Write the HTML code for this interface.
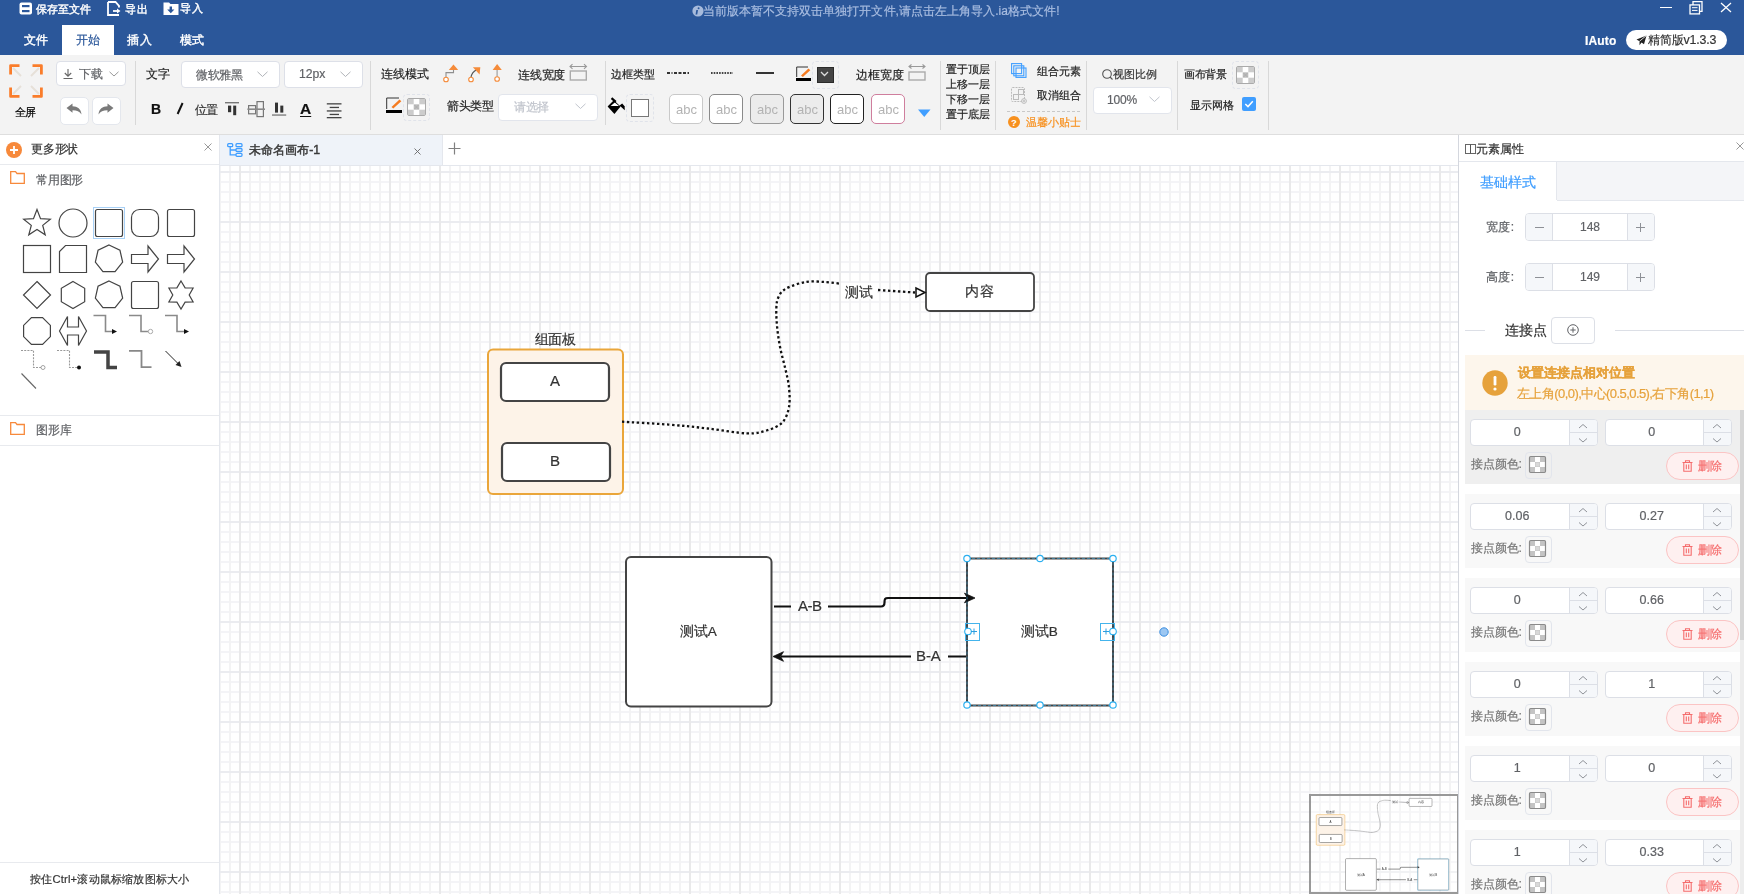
<!DOCTYPE html><html><head><meta charset="utf-8"><style>
*{box-sizing:border-box;margin:0;padding:0}
html,body{width:1744px;height:894px;overflow:hidden}
body{position:relative;font-family:"Liberation Sans",sans-serif;font-size:12px;color:#333;background:#fff}
.a{position:absolute}
.t{white-space:nowrap;will-change:transform;-webkit-text-stroke-width:0.2px}
</style></head><body>
<div class="a" style="left:0px;top:0px;width:1744px;height:55px;background:#2b579a"></div>
<svg class="a" style="left:19px;top:2px;" width="14" height="13" viewBox="0 0 14 13"><rect x="0.5" y="0.5" width="12.5" height="12" rx="2" fill="#fff"/><rect x="3" y="3" width="7.5" height="2.2" fill="#2b579a"/><rect x="3" y="8" width="7.5" height="2.2" fill="#2b579a"/></svg>
<div class="a t" style="left:35.84px;top:3.68px;font-size:11.2px;line-height:11.2px;color:#fff;font-weight:normal;letter-spacing:-0.040px;-webkit-text-stroke-width:0.4px">保存至文件</div>
<svg class="a" style="left:106px;top:1px;" width="17" height="15" viewBox="0 0 17 15"><path d="M2 1H9.5L13 4.8V6.5M2 1V14H13" fill="none" stroke="#fff" stroke-width="1.8"/><path d="M7 10H12" stroke="#fff" stroke-width="1.8"/><path d="M11 7.5L14.5 10L11 12.5Z" fill="#fff"/></svg>
<div class="a t" style="left:125.00px;top:4.00px;font-size:11px;line-height:11px;color:#fff;font-weight:normal;letter-spacing:0.800px;-webkit-text-stroke-width:0.4px">导出</div>
<svg class="a" style="left:163px;top:1px;" width="16" height="15" viewBox="0 0 16 15"><path d="M0.5 1.5H6L7.5 3H15.5V14H0.5Z" fill="#fff"/><path d="M6.6 5.6V8.6H4.2L7.8 12.3L11.4 8.6H9V5.6Z" fill="#2b579a"/></svg>
<div class="a t" style="left:180.00px;top:3.20px;font-size:11px;line-height:11px;color:#fff;font-weight:normal;letter-spacing:0.800px;-webkit-text-stroke-width:0.4px">导入</div>
<svg class="a" style="left:692px;top:5px;" width="12" height="12" viewBox="0 0 12 12"><circle cx="6" cy="6" r="5.6" fill="#a7bbdc"/><rect x="5.2" y="5" width="1.7" height="4.5" fill="#2b579a" transform="skewX(-10)"/><circle cx="6.6" cy="3.3" r="0.95" fill="#2b579a"/></svg>
<div class="a t" style="left:703.20px;top:4.52px;font-size:12px;line-height:12px;color:#a9bde0;font-weight:normal;letter-spacing:0.035px;">当前版本暂不支持双击单独打开文件,请点击左上角导入.ia格式文件!</div>
<div class="a" style="left:1660px;top:7px;width:12px;height:1.3px;background:#fff"></div>
<svg class="a" style="left:1688px;top:0px;" width="16" height="15" viewBox="0 0 16 15"><rect x="2" y="4.9" width="9.5" height="9" fill="none" stroke="#fff" stroke-width="1.3"/><path d="M5 4.9V1.7H14V11.3H11.5" fill="none" stroke="#fff" stroke-width="1.3"/><path d="M4 7.7H9.5M4 10.4H9.5" stroke="#fff" stroke-width="1"/></svg>
<svg class="a" style="left:1720px;top:2px;" width="12" height="11" viewBox="0 0 12 11"><path d="M1 1L11 10M11 1L1 10" stroke="#fff" stroke-width="1.3"/></svg>
<div class="a" style="left:62px;top:25px;width:52px;height:30px;background:#fff"></div>
<div class="a t" style="left:23.64px;top:34.04px;font-size:12.4px;line-height:12.4px;color:#fff;font-weight:normal;letter-spacing:0.480px;-webkit-text-stroke-width:0.4px">文件</div>
<div class="a t" style="left:75.98px;top:34.36px;font-size:12.4px;line-height:12.4px;color:#2b579a;font-weight:normal;">开始</div>
<div class="a t" style="left:127.16px;top:34.36px;font-size:12.4px;line-height:12.4px;color:#fff;font-weight:normal;letter-spacing:0.640px;-webkit-text-stroke-width:0.4px">插入</div>
<div class="a t" style="left:179.82px;top:34.36px;font-size:12.4px;line-height:12.4px;color:#fff;font-weight:normal;letter-spacing:0.160px;-webkit-text-stroke-width:0.4px">模式</div>
<div class="a t" style="left:1585.12px;top:35.10px;font-size:12px;line-height:12px;color:#fff;font-weight:bold;letter-spacing:0.160px;">IAuto</div>
<div class="a" style="left:1626px;top:30px;width:101px;height:20px;background:#fff;border-radius:10px"></div>
<svg class="a" style="left:1636px;top:35px;" width="11" height="11" viewBox="0 0 11 11"><path d="M10.5 0.5L0.5 4.5L3.5 6.2L3.5 10.3L5.5 7.6L8 9.2Z" fill="#222"/><path d="M10.5 0.5L3.5 6.2" stroke="#fff" stroke-width="0.8"/></svg>
<div class="a t" style="left:1647.82px;top:34.20px;font-size:12.4px;line-height:12.4px;color:#333;font-weight:normal;letter-spacing:-0.180px;">精简版v1.3.3</div>
<div class="a" style="left:0px;top:55px;width:1744px;height:79px;background:#f3f3f3"></div>
<div class="a" style="left:0px;top:133.5px;width:1744px;height:1px;background:#dedede"></div>
<div class="a" style="left:135px;top:61px;width:1px;height:64px;background:#d8d8d8"></div>
<div class="a" style="left:370px;top:61px;width:1px;height:69px;background:#d8d8d8"></div>
<div class="a" style="left:605px;top:61px;width:1px;height:64px;background:#d8d8d8"></div>
<div class="a" style="left:940px;top:61px;width:1px;height:69px;background:#d8d8d8"></div>
<div class="a" style="left:995px;top:61px;width:1px;height:69px;background:#d8d8d8"></div>
<div class="a" style="left:1086px;top:61px;width:1px;height:69px;background:#d8d8d8"></div>
<div class="a" style="left:1177px;top:61px;width:1px;height:69px;background:#d8d8d8"></div>
<div class="a" style="left:1268px;top:61px;width:1px;height:69px;background:#d8d8d8"></div>
<svg class="a" style="left:9px;top:64px;" width="34" height="34" viewBox="0 0 34 34"><g stroke="#e6e0d8" stroke-width="2"><path d="M4 4L12 12M30 4L22 12M4 30L12 22M30 30L22 22"/></g>
<g fill="none" stroke="#fa7d2b" stroke-width="2.8" stroke-linejoin="round"><path d="M1.6 10.5V1.6H10.5M23.5 1.6H32.4V10.5M1.6 23.5V32.4H10.5M23.5 32.4H32.4V23.5"/></g></svg>
<div class="a t" style="left:15.48px;top:106.50px;font-size:11px;line-height:11px;color:#000;font-weight:normal;letter-spacing:-0.800px;">全屏</div>
<div class="a" style="left:56px;top:61px;width:69.5px;height:24.5px;background:#fff;border:1px solid #dde0e8;border-radius:4px"></div>
<svg class="a" style="left:62px;top:68px;" width="12" height="12" viewBox="0 0 12 12"><path d="M6 1V8M2.8 5L6 8.2L9.2 5M1.5 10.5H10.5" fill="none" stroke="#666" stroke-width="1.1"/></svg>
<div class="a t" style="left:78.82px;top:67.84px;font-size:12px;line-height:12px;color:#606266;font-weight:normal;letter-spacing:0.480px;">下载</div>
<svg class="a" style="left:109px;top:71px;" width="10" height="6" viewBox="0 0 10 6"><path d="M0.5 0.8L5 5L9.5 0.8" fill="none" stroke="#999" stroke-width="1"/></svg>
<div class="a" style="left:59.5px;top:96.5px;width:29px;height:28px;background:#fff;border:1px solid #e4e7ed;border-radius:5px"></div>
<div class="a" style="left:92px;top:96.5px;width:29px;height:28px;background:#fff;border:1px solid #e4e7ed;border-radius:5px"></div>
<svg class="a" style="left:66px;top:103px;" width="16" height="12" viewBox="0 0 16 12"><path d="M0.5 5L6.5 0.5V3.3C11.5 3.3 15 6 15.5 11.5C13.5 8.5 11 7.3 6.5 7.3V9.8Z" fill="#7a7a7a"/></svg>
<svg class="a" style="left:98px;top:103px;" width="16" height="12" viewBox="0 0 16 12"><path d="M15.5 5L9.5 0.5V3.3C4.5 3.3 1 6 0.5 11.5C2.5 8.5 5 7.3 9.5 7.3V9.8Z" fill="#7a7a7a"/></svg>
<div class="a t" style="left:145.50px;top:68.36px;font-size:12px;line-height:12px;color:#222;font-weight:normal;">文字</div>
<div class="a" style="left:180.5px;top:61px;width:99px;height:27px;background:#fff;border:1px solid #dde0e8;border-radius:4px"></div>
<div class="a t" style="left:195.80px;top:68.98px;font-size:12.1px;line-height:12.1px;color:#606266;font-weight:normal;letter-spacing:-0.266px;">微软雅黑</div>
<svg class="a" style="left:257px;top:71px;" width="11" height="7" viewBox="0 0 11 7"><path d="M0.5 0.8L5.5 5.5L10.5 0.8" fill="none" stroke="#b0b3b8" stroke-width="1"/></svg>
<div class="a" style="left:283.5px;top:61px;width:79px;height:27px;background:#fff;border:1px solid #dde0e8;border-radius:4px"></div>
<div class="a t" style="left:298.70px;top:68.20px;font-size:12.2px;line-height:12.2px;color:#606266;font-weight:normal;">12px</div>
<svg class="a" style="left:340px;top:71px;" width="11" height="7" viewBox="0 0 11 7"><path d="M0.5 0.8L5.5 5.5L10.5 0.8" fill="none" stroke="#b0b3b8" stroke-width="1"/></svg>
<div class="a t" style="left:151.00px;top:102.00px;font-size:14px;line-height:14px;color:#111;font-weight:bold;">B</div>
<svg class="a" style="left:175px;top:102px;" width="9" height="13" viewBox="0 0 9 13"><path d="M7.6 1L2.6 12" stroke="#111" stroke-width="2"/></svg>
<div class="a t" style="left:194.90px;top:103.70px;font-size:12px;line-height:12px;color:#333;font-weight:normal;letter-spacing:-0.800px;">位置</div>
<svg class="a" style="left:224px;top:101px;" width="16" height="16" viewBox="0 0 16 16"><rect x="1" y="1" width="14" height="1.4" fill="#777"/><rect x="4" y="4.6" width="3.2" height="6.6" fill="#333"/><rect x="9.2" y="4.6" width="3" height="9.6" fill="#333"/></svg>
<svg class="a" style="left:246px;top:100px;" width="20" height="18" viewBox="0 0 20 18"><g fill="none" stroke="#777" stroke-width="1.2"><rect x="2.6" y="5.6" width="7" height="8.2"/><rect x="11" y="1.6" width="6.4" height="15"/></g><path d="M1.4 9.2H19" stroke="#888" stroke-width="1.6"/></svg>
<svg class="a" style="left:271px;top:101px;" width="16" height="16" viewBox="0 0 16 16"><rect x="4" y="1.6" width="3" height="10" fill="#333"/><rect x="9.3" y="4.6" width="3" height="7" fill="#333"/><rect x="1" y="13.4" width="14.2" height="1.3" fill="#777"/></svg>
<div class="a t" style="left:300.00px;top:101.00px;font-size:15.5px;line-height:15.5px;color:#111;font-weight:bold;text-decoration:underline;text-decoration-thickness:1px;text-underline-offset:1.5px">A</div>
<svg class="a" style="left:326px;top:102px;" width="16" height="17" viewBox="0 0 16 17"><g fill="#444"><rect x="0.8" y="1.2" width="14.7" height="1.3"/><rect x="3.7" y="4.8" width="9.3" height="1.3"/><rect x="0.8" y="8.3" width="14.7" height="1.3"/><rect x="3.7" y="11.8" width="9.3" height="1.3"/><rect x="0.8" y="15" width="14.7" height="1.3"/></g></svg>
<div class="a t" style="left:380.50px;top:68.36px;font-size:12.3px;line-height:12.3px;color:#222;font-weight:normal;letter-spacing:0.154px;">连线模式</div>
<svg class="a" style="left:442px;top:64px;" width="17" height="19" viewBox="0 0 17 19"><path d="M4 13.2V8.6H11.5V5" fill="none" stroke="#8f8f8f" stroke-width="1.1"/><circle cx="4" cy="15.5" r="2.3" fill="#fff" stroke="#f58b3a" stroke-width="1.1"/><path d="M11.5 0.6L16.2 5.9H6.8Z" fill="#f58b3a"/></svg>
<svg class="a" style="left:467px;top:64px;" width="14" height="19" viewBox="0 0 14 19"><path d="M4 13.2C4.5 10 6.5 7.5 9.5 5.8" fill="none" stroke="#555" stroke-width="1.1"/><circle cx="4" cy="15.5" r="2.3" fill="#fff" stroke="#f58b3a" stroke-width="1.1"/><path d="M5.9 3.2L13.3 3.2L12.6 10.6Z" fill="#f58b3a"/></svg>
<svg class="a" style="left:492px;top:64px;" width="11" height="19" viewBox="0 0 11 19"><path d="M5.1 5V12.8" stroke="#999" stroke-width="1.1"/><circle cx="5.1" cy="15" r="2.3" fill="#fff" stroke="#f58b3a" stroke-width="1.1"/><path d="M5.1 0L9.8 5.9H0.6Z" fill="#f58b3a"/></svg>
<div class="a t" style="left:517.50px;top:69.16px;font-size:12.3px;line-height:12.3px;color:#222;font-weight:normal;letter-spacing:-0.208px;">连线宽度</div>
<svg class="a" style="left:569px;top:63px;" width="19" height="18" viewBox="0 0 19 18"><g fill="none" stroke="#999" stroke-width="1.1"><path d="M1 3.5H17.5M3.5 1.2L1 3.5L3.5 5.8M15 1.2L17.5 3.5L15 5.8"/><rect x="1.3" y="8" width="16" height="9" stroke="#aaa" stroke-width="1.4"/></g></svg>
<svg class="a" style="left:386px;top:97px;" width="17" height="16" viewBox="0 0 17 16"><path d="M0.7 12V1H13" fill="none" stroke="#333" stroke-width="1"/><path d="M5.5 10L13.5 2.5L15.3 4.3L7.3 11.5Z" fill="#f57b20"/><rect x="0" y="13" width="16" height="3" fill="#000"/></svg>
<div class="a" style="left:402.5px;top:93.5px;width:27px;height:27px;border:1px dashed #e0e3ea;border-radius:4px"></div>
<svg class="a" style="left:407px;top:98px;" width="19" height="18" viewBox="0 0 19 18"><rect x="0.5" y="0.5" width="18" height="17" rx="1.5" fill="#fff" stroke="#aaa" stroke-width="1"/><rect x="1" y="1" width="5.7" height="5.3" fill="#ccc"/><rect x="12.3" y="1" width="5.7" height="5.3" fill="#ccc"/><rect x="6.7" y="6.3" width="5.6" height="5.4" fill="#bdbdbd"/><rect x="1" y="11.7" width="5.7" height="5.3" fill="#ccc"/><rect x="12.3" y="11.7" width="5.7" height="5.3" fill="#ccc"/><path d="M7.5 7L11.5 11M11.5 7L7.5 11" stroke="#aaa" stroke-width="0.8"/></svg>
<div class="a t" style="left:446.50px;top:100.18px;font-size:12.1px;line-height:12.1px;color:#222;font-weight:normal;letter-spacing:-0.266px;">箭头类型</div>
<div class="a" style="left:498px;top:93.5px;width:99.5px;height:27px;background:#fff;border:1px solid #e2e5ec;border-radius:4px"></div>
<div class="a t" style="left:513.82px;top:101.16px;font-size:12px;line-height:12px;color:#c0c4cc;font-weight:normal;letter-spacing:-0.480px;">请选择</div>
<svg class="a" style="left:575px;top:103px;" width="11" height="7" viewBox="0 0 11 7"><path d="M0.5 0.8L5.5 5.5L10.5 0.8" fill="none" stroke="#c0c4cc" stroke-width="1"/></svg>
<div class="a t" style="left:610.50px;top:68.66px;font-size:11px;line-height:11px;color:#222;font-weight:normal;letter-spacing:-0.155px;">边框类型</div>
<svg class="a" style="left:667px;top:72px;" width="22" height="2" viewBox="0 0 22 2"><path d="M0 1H22" stroke="#333" stroke-width="1.8" stroke-dasharray="3 1.5 1 1.5 3 1.5 3 1.5 3 1.5"/></svg>
<svg class="a" style="left:711px;top:72px;" width="22" height="2" viewBox="0 0 22 2"><path d="M0 1H22" stroke="#444" stroke-width="1.8" stroke-dasharray="1.6 1.1"/></svg>
<div class="a" style="left:756px;top:72px;width:18px;height:2px;background:#333"></div>
<svg class="a" style="left:607px;top:97px;" width="19" height="18" viewBox="0 0 19 18"><path d="M0.6 9.5L6.8 3.3L13.6 9.5L7.4 17Z" fill="#000"/><path d="M3.6 9.1L7.8 5.4L12 9.1Z" fill="#fff"/><path d="M4.5 1.2L8.8 4.8" stroke="#000" stroke-width="2.2"/><path d="M12.5 8.5L15.2 6.6L17.6 9.3L17.8 13.3Z" fill="#000"/></svg>
<div class="a" style="left:626px;top:94px;width:28px;height:28px;border:1px dashed #e0e3ea;border-radius:4px"></div>
<div class="a" style="left:631px;top:99px;width:18px;height:18px;background:#fff;border:1px solid #777"></div>
<div class="a" style="left:669px;top:94px;width:34px;height:30px;background:#fff;border:1px solid #c9c9c9;border-radius:5px"></div>
<div class="a t" style="left:675.80px;top:101.80px;font-size:13px;line-height:13px;color:#b3b3b3;font-weight:normal;line-height:16px;-webkit-text-stroke-width:0">abc</div>
<div class="a" style="left:709px;top:94px;width:34px;height:30px;background:#fff;border:1px solid #8a8a8a;border-radius:5px"></div>
<div class="a t" style="left:715.80px;top:101.80px;font-size:13px;line-height:13px;color:#b3b3b3;font-weight:normal;line-height:16px;-webkit-text-stroke-width:0">abc</div>
<div class="a" style="left:750px;top:94px;width:34px;height:30px;background:#ececec;border:1px solid #9a9a9a;border-radius:5px"></div>
<div class="a t" style="left:756.80px;top:101.80px;font-size:13px;line-height:13px;color:#b3b3b3;font-weight:normal;line-height:16px;-webkit-text-stroke-width:0">abc</div>
<div class="a" style="left:790px;top:94px;width:34px;height:30px;background:#ececec;border:1px solid #333;border-radius:5px"></div>
<div class="a t" style="left:796.80px;top:101.80px;font-size:13px;line-height:13px;color:#b3b3b3;font-weight:normal;line-height:16px;-webkit-text-stroke-width:0">abc</div>
<div class="a" style="left:830px;top:94px;width:34px;height:30px;background:#fff;border:1px solid #222;border-radius:5px"></div>
<div class="a t" style="left:836.80px;top:101.80px;font-size:13px;line-height:13px;color:#b3b3b3;font-weight:normal;line-height:16px;-webkit-text-stroke-width:0">abc</div>
<div class="a" style="left:871px;top:94px;width:34px;height:30px;background:#fff;border:1px solid #cf7e9d;border-radius:5px"></div>
<div class="a t" style="left:877.80px;top:101.80px;font-size:13px;line-height:13px;color:#b3b3b3;font-weight:normal;line-height:16px;-webkit-text-stroke-width:0">abc</div>
<svg class="a" style="left:918px;top:109px;" width="13" height="9" viewBox="0 0 13 9"><path d="M0 0.5H12.5L6.25 8Z" fill="#409eff"/></svg>
<svg class="a" style="left:796px;top:66px;" width="16" height="15" viewBox="0 0 16 15"><path d="M0.7 11V1H12" fill="none" stroke="#333" stroke-width="1"/><path d="M5 9.5L12.5 2.5L14.3 4.3L6.8 11Z" fill="#f57b20"/><rect x="0" y="12" width="15" height="3" fill="#000"/></svg>
<div class="a" style="left:811.5px;top:61px;width:27px;height:27.5px;border:1px dashed #e0e3ea;border-radius:4px"></div>
<div class="a" style="left:816.5px;top:66.5px;width:17px;height:16.5px;background:#444;border:1px solid #2a2a2a"></div>
<svg class="a" style="left:820px;top:71px;" width="9" height="6" viewBox="0 0 9 6"><path d="M1 1L4.5 4.5L8 1" fill="none" stroke="#ddd" stroke-width="1.3"/></svg>
<div class="a t" style="left:855.80px;top:68.98px;font-size:12.3px;line-height:12.3px;color:#222;font-weight:normal;letter-spacing:0.156px;">边框宽度</div>
<svg class="a" style="left:908px;top:64px;" width="18" height="17" viewBox="0 0 18 17"><g fill="none" stroke="#999" stroke-width="1.1"><path d="M1 2.5H17M3.5 0.5L1 2.5L3.5 4.5M14.5 0.5L17 2.5L14.5 4.5"/><rect x="1" y="8" width="16" height="8" stroke="#aaa" stroke-width="1.4"/></g></svg>
<div class="a t" style="left:946.00px;top:63.66px;font-size:11.3px;line-height:11.3px;color:#222;font-weight:normal;letter-spacing:-0.104px;">置于顶层</div>
<div class="a t" style="left:946.00px;top:78.66px;font-size:11.3px;line-height:11.3px;color:#222;font-weight:normal;letter-spacing:-0.104px;">上移一层</div>
<div class="a t" style="left:946.00px;top:93.66px;font-size:11.3px;line-height:11.3px;color:#222;font-weight:normal;letter-spacing:-0.104px;">下移一层</div>
<div class="a t" style="left:946.00px;top:108.66px;font-size:11.3px;line-height:11.3px;color:#222;font-weight:normal;letter-spacing:-0.104px;">置于底层</div>
<svg class="a" style="left:1011px;top:63px;" width="16" height="15" viewBox="0 0 16 15"><g fill="none" stroke="#409eff" stroke-width="1.1"><rect x="0.6" y="0.6" width="10" height="10"/><rect x="2.8" y="2.8" width="10" height="10"/><rect x="5" y="5" width="10" height="9.4"/></g></svg>
<div class="a t" style="left:1036.82px;top:66.32px;font-size:11.3px;line-height:11.3px;color:#222;font-weight:normal;">组合元素</div>
<svg class="a" style="left:1011px;top:87px;" width="16" height="17" viewBox="0 0 16 17"><g fill="none" stroke="#bbb" stroke-width="1"><rect x="0.5" y="0.5" width="13" height="14" rx="1" stroke-dasharray="2 1"/><rect x="2.5" y="7.5" width="5" height="5"/><rect x="7.5" y="2.5" width="5" height="5"/><circle cx="13" cy="14" r="2.4" fill="#f3f3f3"/><path d="M11.8 14H14.2M13 12.8V15.2"/></g></svg>
<div class="a t" style="left:1036.82px;top:90.20px;font-size:11.3px;line-height:11.3px;color:#222;font-weight:normal;">取消组合</div>
<div class="a" style="left:1007px;top:110.5px;width:74px;height:1px;background:repeating-linear-gradient(90deg,#c8c8c8 0 3px,transparent 3px 5px)"></div>
<svg class="a" style="left:1008px;top:116px;" width="12" height="12" viewBox="0 0 12 12"><circle cx="6" cy="6" r="6" fill="#f7901e"/><text x="6" y="10" font-size="9.5" text-anchor="middle" fill="#fff" font-family="Liberation Sans" font-weight="bold">?</text></svg>
<div class="a t" style="left:1025.82px;top:116.50px;font-size:11.2px;line-height:11.2px;color:#f7901e;font-weight:normal;">温馨小贴士</div>
<svg class="a" style="left:1102px;top:69px;" width="11" height="11" viewBox="0 0 11 11"><circle cx="5" cy="5" r="4.3" fill="none" stroke="#555" stroke-width="1.1"/><path d="M8 8L10.5 10.5" stroke="#555" stroke-width="1.1"/></svg>
<div class="a t" style="left:1113.00px;top:68.84px;font-size:11px;line-height:11px;color:#333;font-weight:normal;letter-spacing:0.045px;">视图比例</div>
<div class="a" style="left:1092.5px;top:86.5px;width:79px;height:27px;background:#fff;border:1px solid #e2e5ec;border-radius:4px"></div>
<div class="a t" style="left:1107.38px;top:93.82px;font-size:12px;line-height:12px;color:#606266;font-weight:normal;letter-spacing:-0.163px;">100%</div>
<svg class="a" style="left:1149px;top:96px;" width="11" height="7" viewBox="0 0 11 7"><path d="M0.5 0.8L5.5 5.5L10.5 0.8" fill="none" stroke="#c0c4cc" stroke-width="1"/></svg>
<div class="a t" style="left:1183.80px;top:68.84px;font-size:11.1px;line-height:11.1px;color:#222;font-weight:normal;letter-spacing:-0.268px;">画布背景</div>
<div class="a" style="left:1231.5px;top:61px;width:27px;height:28px;border:1px dashed #e0e3ea;border-radius:4px"></div>
<svg class="a" style="left:1236px;top:66px;" width="19" height="18" viewBox="0 0 19 18"><rect x="0.5" y="0.5" width="18" height="17" rx="1.5" fill="#fff" stroke="#aaa" stroke-width="1"/><rect x="1" y="1" width="5.7" height="5.3" fill="#ccc"/><rect x="12.3" y="1" width="5.7" height="5.3" fill="#ccc"/><rect x="6.7" y="6.3" width="5.6" height="5.4" fill="#bdbdbd"/><rect x="1" y="11.7" width="5.7" height="5.3" fill="#ccc"/><rect x="12.3" y="11.7" width="5.7" height="5.3" fill="#ccc"/><path d="M7.5 7L11.5 11M11.5 7L7.5 11" stroke="#aaa" stroke-width="0.8"/></svg>
<div class="a t" style="left:1189.80px;top:99.82px;font-size:11.3px;line-height:11.3px;color:#222;font-weight:normal;letter-spacing:0.047px;">显示网格</div>
<svg class="a" style="left:1242px;top:97px;" width="14" height="14" viewBox="0 0 14 14"><rect x="0" y="0" width="14" height="14" rx="2" fill="#409eff"/><path d="M3.3 7L6 9.6L10.8 4.3" fill="none" stroke="#fff" stroke-width="1.5"/></svg>
<div class="a" style="left:0px;top:134.5px;width:219.5px;height:760px;background:#fff"></div>
<div class="a" style="left:219px;top:134.5px;width:1px;height:760px;background:#e4e7ed"></div>
<svg class="a" style="left:6px;top:142px;" width="16" height="16" viewBox="0 0 16 16"><circle cx="8" cy="8" r="8" fill="#f7893b"/><path d="M8 4V12M4 8H12" stroke="#fff" stroke-width="1.8"/></svg>
<div class="a t" style="left:31.34px;top:142.50px;font-size:12.1px;line-height:12.1px;color:#333;font-weight:normal;letter-spacing:-0.208px;">更多形状</div>
<svg class="a" style="left:204px;top:143px;" width="8" height="8" viewBox="0 0 8 8"><path d="M0.5 0.5L7.5 7.5M7.5 0.5L0.5 7.5" stroke="#999" stroke-width="1"/></svg>
<div class="a" style="left:0px;top:164px;width:219px;height:1px;background:#e8eaee"></div>
<svg class="a" style="left:10px;top:171px;" width="15" height="13" viewBox="0 0 15 13"><path d="M0.7 0.7H5.5L7 2.5H14.3V12.3H0.7Z" fill="none" stroke="#f7893b" stroke-width="1.3"/></svg>
<div class="a t" style="left:35.82px;top:173.50px;font-size:12.1px;line-height:12.1px;color:#606266;font-weight:normal;letter-spacing:-0.208px;">常用图形</div>
<div class="a" style="left:0px;top:415px;width:219px;height:1px;background:#e8eaee"></div>
<svg class="a" style="left:10px;top:422px;" width="15" height="13" viewBox="0 0 15 13"><path d="M0.7 0.7H5.5L7 2.5H14.3V12.3H0.7Z" fill="none" stroke="#f7893b" stroke-width="1.3"/></svg>
<div class="a t" style="left:35.82px;top:424.16px;font-size:12.2px;line-height:12.2px;color:#606266;font-weight:normal;letter-spacing:-0.160px;">图形库</div>
<div class="a" style="left:0px;top:444.5px;width:219px;height:1px;background:#e8eaee"></div>
<div class="a" style="left:0px;top:862px;width:219px;height:1px;background:#e8eaee"></div>
<div class="a t" style="left:29.50px;top:873.62px;font-size:11.2px;line-height:11.2px;color:#333;font-weight:normal;letter-spacing:0.200px;">按住Ctrl+滚动鼠标缩放图标大小</div>
<svg class="a" style="left:0px;top:0px;" width="220" height="400" viewBox="0 0 220 400"><polygon points="37.00,209.50 40.53,218.65 50.31,219.17 42.71,225.35 45.23,234.83 37.00,229.50 28.77,234.83 31.29,225.35 23.69,219.17 33.47,218.65" fill="none" stroke="#444" stroke-width="1.2"/><circle cx="73" cy="223" r="14" fill="none" stroke="#444" stroke-width="1.2"/><rect x="93.5" y="207.5" width="31" height="31" fill="none" stroke="#a8d1f7" stroke-width="1"/><rect x="95.5" y="209.5" width="27" height="27" rx="2" fill="none" stroke="#444" stroke-width="1.2"/><rect x="131.5" y="209.5" width="27" height="27" rx="8" fill="none" stroke="#444" stroke-width="1.2"/><rect x="167.5" y="209.5" width="27" height="27" rx="2" fill="none" stroke="#444" stroke-width="1.2"/><rect x="23.5" y="245.5" width="27" height="27" fill="none" stroke="#444" stroke-width="1.2"/><path d="M65.5 245.5H86.5V272.5H59.5V251.5Z" fill="none" stroke="#444" stroke-width="1.2"/><polygon points="109.00,245.00 119.95,250.27 122.65,262.12 115.07,271.61 102.93,271.61 95.35,262.12 98.05,250.27" fill="none" stroke="#444" stroke-width="1.2"/><path d="M131.5 254.5H148V246L158.5 259L148 272V263.5H131.5Z" fill="none" stroke="#444" stroke-width="1.2"/><path d="M167.5 254.5H184V246L194.5 259L184 272V263.5H167.5Z" fill="none" stroke="#444" stroke-width="1.2"/><path d="M37 281.5L50.5 295L37 308.5L23.5 295Z" fill="none" stroke="#444" stroke-width="1.2"/><polygon points="73.00,281.50 84.69,288.25 84.69,301.75 73.00,308.50 61.31,301.75 61.31,288.25" fill="none" stroke="#444" stroke-width="1.2"/><polygon points="109.00,281.00 119.95,286.27 122.65,298.12 115.07,307.61 102.93,307.61 95.35,298.12 98.05,286.27" fill="none" stroke="#444" stroke-width="1.2"/><rect x="131.5" y="281.5" width="27" height="27" rx="2" fill="none" stroke="#444" stroke-width="1.2"/><polygon points="181.00,281.00 185.10,287.90 193.12,288.00 189.20,295.00 193.12,302.00 185.10,302.10 181.00,309.00 176.90,302.10 168.88,302.00 172.80,295.00 168.88,288.00 176.90,287.90" fill="none" stroke="#444" stroke-width="1.2"/><polygon points="31.45,317.60 42.55,317.60 50.40,325.45 50.40,336.55 42.55,344.40 31.45,344.40 23.60,336.55 23.60,325.45" fill="none" stroke="#444" stroke-width="1.2"/><path d="M59.5 331L67.5 316.5V327H78.5V316.5L86.5 331L78.5 345.5V335H67.5V345.5Z" fill="none" stroke="#444" stroke-width="1.2"/><path d="M93.5 315.5H105.5V331.5H113.5" stroke="#8a8a8a" stroke-width="1.6" fill="none"/><path d="M129 315.5H141V331.5H149" stroke="#8a8a8a" stroke-width="1.6" fill="none"/><path d="M165 315.5H177V331.5H185" stroke="#8a8a8a" stroke-width="1.6" fill="none"/><path d="M112 329L117 331.5L112 334Z" fill="#111"/><circle cx="150.5" cy="331.5" r="2.2" fill="#fff" stroke="#aaa" stroke-width="1"/><path d="M184 329L189 331.5L184 334Z" fill="#111"/><path d="M21 350.5H33.5V367.5H41" stroke="#999" stroke-width="1.1" fill="none" stroke-dasharray="2 1.2"/><circle cx="43" cy="367.5" r="2" fill="#fff" stroke="#999" stroke-width="0.9"/><path d="M57 350.5H69.5V367.5H77" stroke="#999" stroke-width="1.1" fill="none" stroke-dasharray="2 1.2"/><circle cx="79" cy="367.5" r="2" fill="#111"/><path d="M94 352H108V367.5H117" stroke="#444" stroke-width="3.5" fill="none"/><path d="M129 350.8H141.5V367.2H151.5" stroke="#888" stroke-width="1.8" fill="none"/><path d="M165.5 351L179 364.5" stroke="#222" stroke-width="1"/><path d="M181.5 367L175.5 365L179.5 361Z" fill="#222"/><path d="M21.5 373.5L36 388.5" stroke="#666" stroke-width="1.1"/></svg>
<div class="a" style="left:220px;top:134.5px;width:1238px;height:31px;background:#fff"></div>
<div class="a" style="left:220px;top:134.5px;width:222.5px;height:31px;background:#eff3f9"></div>
<div class="a" style="left:442px;top:134.5px;width:1px;height:31px;background:#e4e7ed"></div>
<div class="a" style="left:220px;top:165px;width:1238px;height:1px;background:#e4e7ed"></div>
<svg class="a" style="left:227px;top:143px;" width="16" height="14" viewBox="0 0 16 14"><g fill="none" stroke="#409eff" stroke-width="1.3"><rect x="0.7" y="0.7" width="5" height="3" rx="1"/><rect x="9" y="0.7" width="6" height="3" rx="1"/><rect x="9" y="5.5" width="6" height="3" rx="1"/><rect x="9" y="10.3" width="6" height="3" rx="1"/><path d="M3.2 3.7V11.8H9M3.2 7H9"/></g></svg>
<div class="a t" style="left:248.50px;top:144.36px;font-size:12.3px;line-height:12.3px;color:#3a3a3a;font-weight:normal;letter-spacing:0.033px;-webkit-text-stroke-width:0.45px">未命名画布-1</div>
<svg class="a" style="left:414px;top:148px;" width="7" height="7" viewBox="0 0 7 7"><path d="M0.5 0.5L6.5 6.5M6.5 0.5L0.5 6.5" stroke="#666" stroke-width="0.9"/></svg>
<svg class="a" style="left:448px;top:142px;" width="13" height="13" viewBox="0 0 13 13"><path d="M6.5 0.5V12.5M0.5 6.5H12.5" stroke="#808080" stroke-width="1.2"/></svg>
<div class="a" style="left:220px;top:166px;width:1238px;height:728px;background-color:#fff;background-image:
linear-gradient(90deg,#e9e9ea 2px,transparent 2px),
linear-gradient(180deg,#ebecf0 2px,transparent 2px),
linear-gradient(90deg,#f3f3f4 2px,transparent 2px),
linear-gradient(180deg,#f4f4f7 2px,transparent 2px);
background-size:50px 50px,50px 50px,10px 10px,10px 10px;
background-position:19px 0,0 5px,9px 0,0 5px"></div>
<svg class="a" style="left:220px;top:166px;" width="1238" height="728" viewBox="220 166 1238 728"><g id="dg">
<rect x="488" y="349.5" width="135" height="144.5" rx="5" fill="#fdf3e8" stroke="#eaa63a" stroke-width="2"/>
<rect x="501" y="363" width="108" height="38" rx="5" fill="#fff" stroke="#444" stroke-width="2.2"/>
<rect x="502" y="443" width="108" height="38" rx="5" fill="#fff" stroke="#444" stroke-width="2.2"/>
<rect x="926" y="273" width="108" height="38" rx="4" fill="#fff" stroke="#444" stroke-width="1.8"/>
<path d="M622 421.7C629.8 422.2 654.4 423.5 668.7 424.6C683.0 425.7 694.8 427.0 707.8 428.5C720.8 430.0 737.2 433.1 747 433.4C756.8 433.7 760.6 432.3 766.5 430.5C772.4 428.7 778.5 426.5 782.2 422.6C786.0 418.7 787.9 412.9 789 407C790.1 401.1 789.6 393.9 789 387.4C788.4 380.9 786.6 374.3 785.1 367.8C783.6 361.3 781.6 354.8 780.3 348.3C779.0 341.8 778.0 335.2 777.3 328.7C776.6 322.1 776.1 314.2 776.3 309C776.5 303.8 776.7 300.8 778.3 297.4C779.9 294.0 781.4 291.2 786 288.6C790.6 286.0 799.2 283.1 805.7 282C812.2 280.9 819.3 281.7 825 282C830.7 282.3 837.5 283.4 840 283.7" fill="none" stroke="#111" stroke-width="2.3" stroke-dasharray="2.4 2.6"/>
<path d="M878 290L915 292.5" fill="none" stroke="#111" stroke-width="2.3" stroke-dasharray="2.4 2.6"/>
<path d="M916 288V297L925 292.5Z" fill="#fff" stroke="#111" stroke-width="1.5"/>
<rect x="626" y="557" width="145.5" height="149.5" rx="5" fill="#fff" stroke="#444" stroke-width="2"/>
<rect x="967" y="558.5" width="146" height="147" rx="3" fill="#fff" stroke="#444" stroke-width="2"/>
<path d="M774 606.5H791M828 606.5H881C884 606.5 884.5 605 884.5 602.5C884.5 599 885 598 888 598H968" fill="none" stroke="#111" stroke-width="2.2"/>
<path d="M975 598L964.5 593.2L967.5 598L964.5 602.8Z" fill="#111" stroke="#111" stroke-width="0.8" stroke-linejoin="round"/>
<path d="M966 656.5H948M911 656.5H781" fill="none" stroke="#111" stroke-width="2.2"/>
<path d="M773 656.5L783.5 651.7L780.5 656.5L783.5 661.3Z" fill="#111" stroke="#111" stroke-width="0.8" stroke-linejoin="round"/>
</g><rect x="967" y="558.5" width="146" height="147" fill="none" stroke="#3aa9e0" stroke-width="0.8" stroke-dasharray="3 2" opacity="0.7"/>
<g fill="#fff" stroke="#2cb0f0" stroke-width="1.2">
<circle cx="967" cy="558.5" r="3.2"/><circle cx="1040" cy="558.5" r="3.2"/><circle cx="1113" cy="558.5" r="3.2"/>
<circle cx="967" cy="705" r="3.2"/><circle cx="1040" cy="705" r="3.2"/><circle cx="1113" cy="705" r="3.2"/>
</g>
<g fill="none" stroke="#44b4ec" stroke-width="1"><rect x="965.5" y="623.5" width="14" height="17"/><rect x="1100.5" y="623.5" width="14" height="17"/></g>
<g fill="#fff" stroke="#2cb0f0" stroke-width="1.1"><circle cx="968" cy="631.5" r="3.3"/><circle cx="1113" cy="631.5" r="3.3"/></g>
<path d="M971 631.5H977M974 628.5V634.5M1103 631.5H1109M1106 628.5V634.5" stroke="#2c9ee0" stroke-width="1"/>
<circle cx="1164" cy="632" r="4.2" fill="#9cc7f2" stroke="#3b8ee0" stroke-width="1"/></svg>
<div class="a t" style="left:535.48px;top:332.42px;font-size:14px;line-height:14px;color:#333;font-weight:normal;letter-spacing:-0.560px;">组面板</div>
<div class="a t" style="left:550.48px;top:372.50px;font-size:15px;line-height:15px;color:#333;font-weight:normal;">A</div>
<div class="a t" style="left:550.20px;top:452.50px;font-size:15px;line-height:15px;color:#333;font-weight:normal;">B</div>
<div class="a" style="left:841px;top:283px;width:36px;height:16px;background:#fff"></div>
<div class="a t" style="left:845.00px;top:285.20px;font-size:14px;line-height:14px;color:#333;font-weight:normal;">测试</div>
<div class="a t" style="left:965.20px;top:284.40px;font-size:14px;line-height:14px;color:#333;font-weight:normal;letter-spacing:1.120px;">内容</div>
<div class="a t" style="left:679.82px;top:624.64px;font-size:13.6px;line-height:13.6px;color:#333;font-weight:normal;letter-spacing:-0.160px;">测试A</div>
<div class="a t" style="left:1021.16px;top:624.64px;font-size:13.6px;line-height:13.6px;color:#333;font-weight:normal;letter-spacing:-0.080px;">测试B</div>
<div class="a t" style="left:798.12px;top:597.82px;font-size:15px;line-height:15px;color:#333;font-weight:normal;letter-spacing:-0.560px;">A-B</div>
<div class="a t" style="left:916.32px;top:647.50px;font-size:15px;line-height:15px;color:#333;font-weight:normal;letter-spacing:-0.080px;">B-A</div>
<div class="a" style="left:1308.5px;top:794px;width:150.5px;height:100px;border:2px solid #999;background:rgba(255,255,255,0.3)"></div>
<svg class="a" style="left:0;top:0" width="1744" height="894" viewBox="0 0 1744 894"><g transform="translate(1212.80,740.53) scale(0.212)"><use href="#dg"/><rect x="967" y="558.5" width="146" height="147" fill="none" stroke="#7cc8f0" stroke-width="1.8"/><g font-family="Liberation Sans" font-size="14" fill="#333" text-anchor="middle"><text x="555" y="344">组面板</text><text x="555" y="387">A</text><text x="556" y="467">B</text><text x="859" y="297">测试</text><text x="980" y="297">内容</text><text x="698" y="637">测试A</text><text x="1040" y="637">测试B</text><text x="809" y="611">A-B</text><text x="929" y="661">B-A</text></g></g></svg>
<div class="a" style="left:1458px;top:134.5px;width:286px;height:760px;background:#fff"></div>
<div class="a" style="left:1458px;top:134.5px;width:1.2px;height:760px;background:#d4d7de"></div>
<svg class="a" style="left:1465px;top:143px;" width="11" height="11" viewBox="0 0 11 11"><rect x="0.5" y="1.5" width="10" height="9" fill="none" stroke="#666" stroke-width="1"/><path d="M5.5 1.5V10.5" stroke="#555" stroke-width="1"/></svg>
<div class="a t" style="left:1476.00px;top:143.16px;font-size:12.1px;line-height:12.1px;color:#333;font-weight:normal;">元素属性</div>
<svg class="a" style="left:1736px;top:142px;" width="8" height="9" viewBox="0 0 8 9"><path d="M0.5 0.5L7.5 7.5M7.5 0.5L0.5 7.5" stroke="#999" stroke-width="1"/></svg>
<div class="a" style="left:1459px;top:161px;width:285px;height:1px;background:#e4e7ed"></div>
<div class="a" style="left:1556.5px;top:162px;width:187.5px;height:38px;background:#f4f5f8"></div>
<div class="a" style="left:1556px;top:162px;width:1px;height:38px;background:#e4e7ed"></div>
<div class="a" style="left:1556.5px;top:199.5px;width:187.5px;height:1px;background:#e4e7ed"></div>
<div class="a t" style="left:1480.00px;top:175.18px;font-size:14.2px;line-height:14.2px;color:#409eff;font-weight:normal;">基础样式</div>
<div class="a t" style="left:1485.98px;top:220.96px;font-size:12px;line-height:12px;color:#606266;font-weight:normal;letter-spacing:0.320px;">宽度:</div>
<div class="a" style="left:1525px;top:213px;width:129.5px;height:27.5px;background:#fff;border:1px solid #dcdfe6;border-radius:4px"></div>
<div class="a" style="left:1526px;top:214px;width:27px;height:25.5px;background:#f5f7fa;border-right:1px solid #dcdfe6;border-radius:3px 0 0 3px"></div>
<div class="a" style="left:1626.5px;top:214px;width:27px;height:25.5px;background:#f5f7fa;border-left:1px solid #dcdfe6;border-radius:0 3px 3px 0"></div>
<div class="a" style="left:1535px;top:226.5px;width:9px;height:1px;background:#8d9096"></div>
<div class="a" style="left:1636px;top:226.5px;width:9px;height:1px;background:#8d9096"></div>
<div class="a" style="left:1640px;top:222.5px;width:1px;height:9px;background:#8d9096"></div>
<div class="a t" style="left:1579.70px;top:221.10px;font-size:12px;line-height:12px;color:#606266;font-weight:normal;">148</div>
<div class="a t" style="left:1485.98px;top:270.96px;font-size:12px;line-height:12px;color:#606266;font-weight:normal;letter-spacing:0.320px;">高度:</div>
<div class="a" style="left:1525px;top:263px;width:129.5px;height:27.5px;background:#fff;border:1px solid #dcdfe6;border-radius:4px"></div>
<div class="a" style="left:1526px;top:264px;width:27px;height:25.5px;background:#f5f7fa;border-right:1px solid #dcdfe6;border-radius:3px 0 0 3px"></div>
<div class="a" style="left:1626.5px;top:264px;width:27px;height:25.5px;background:#f5f7fa;border-left:1px solid #dcdfe6;border-radius:0 3px 3px 0"></div>
<div class="a" style="left:1535px;top:276.5px;width:9px;height:1px;background:#8d9096"></div>
<div class="a" style="left:1636px;top:276.5px;width:9px;height:1px;background:#8d9096"></div>
<div class="a" style="left:1640px;top:272.5px;width:1px;height:9px;background:#8d9096"></div>
<div class="a t" style="left:1579.70px;top:271.10px;font-size:12px;line-height:12px;color:#606266;font-weight:normal;">149</div>
<div class="a" style="left:1464.5px;top:330px;width:20.5px;height:1px;background:#dcdfe6"></div>
<div class="a" style="left:1614.5px;top:330px;width:130px;height:1px;background:#dcdfe6"></div>
<div class="a t" style="left:1505.00px;top:322.54px;font-size:14px;line-height:14px;color:#333;font-weight:normal;letter-spacing:0.240px;">连接点</div>
<div class="a" style="left:1551px;top:316.5px;width:43.5px;height:27px;background:#fff;border:1px solid #dcdfe6;border-radius:4px"></div>
<svg class="a" style="left:1567px;top:324px;" width="12" height="12" viewBox="0 0 12 12"><circle cx="6" cy="6" r="5.3" fill="none" stroke="#606266" stroke-width="1"/><path d="M3.3 6H8.7M6 3.3V8.7" stroke="#606266" stroke-width="1"/></svg>
<div class="a" style="left:1464.5px;top:355px;width:279.5px;height:55px;background:#fdf6ec"></div>
<svg class="a" style="left:1482px;top:370px;" width="26" height="26" viewBox="0 0 26 26"><circle cx="13" cy="13" r="12.7" fill="#e6a23c"/><rect x="11.6" y="6" width="2.8" height="9.5" rx="1.2" fill="#fff"/><circle cx="13" cy="19" r="1.6" fill="#fff"/></svg>
<div class="a t" style="left:1517.80px;top:365.84px;font-size:13.2px;line-height:13.2px;color:#e6a23c;font-weight:bold;letter-spacing:-0.060px;">设置连接点相对位置</div>
<div class="a t" style="left:1517.00px;top:387.20px;font-size:13px;line-height:13px;color:#e6a23c;font-weight:normal;letter-spacing:-0.571px;">左上角(0,0),中心(0.5,0.5),右下角(1,1)</div>
<div class="a" style="left:1465px;top:410px;width:274.5px;height:74px;background:#efefef"></div>
<div class="a" style="left:1470px;top:418.5px;width:127.5px;height:27.5px;background:#fff;border:1px solid #dcdfe6;border-radius:4px"></div>
<div class="a" style="left:1568.5px;top:419.5px;width:28px;height:25.5px;background:#f5f7fa;border-left:1px solid #dcdfe6;border-radius:0 3px 3px 0"></div>
<div class="a" style="left:1568.5px;top:432px;width:28px;height:1px;background:#dcdfe6"></div>
<svg class="a" style="left:1577.5px;top:423px;" width="10" height="22" viewBox="0 0 10 22"><path d="M1 5L5 1.5L9 5M1 15.5L5 19L9 15.5" fill="none" stroke="#909399" stroke-width="1"/></svg>
<div class="a t" style="left:1468px;top:424.5px;width:98.5px;text-align:center;font-size:12.5px;line-height:14px;color:#606266">0</div>
<div class="a" style="left:1605px;top:418.5px;width:126.5px;height:27.5px;background:#fff;border:1px solid #dcdfe6;border-radius:4px"></div>
<div class="a" style="left:1702.5px;top:419.5px;width:28px;height:25.5px;background:#f5f7fa;border-left:1px solid #dcdfe6;border-radius:0 3px 3px 0"></div>
<div class="a" style="left:1702.5px;top:432px;width:28px;height:1px;background:#dcdfe6"></div>
<svg class="a" style="left:1711.5px;top:423px;" width="10" height="22" viewBox="0 0 10 22"><path d="M1 5L5 1.5L9 5M1 15.5L5 19L9 15.5" fill="none" stroke="#909399" stroke-width="1"/></svg>
<div class="a t" style="left:1603px;top:424.5px;width:97.5px;text-align:center;font-size:12.5px;line-height:14px;color:#606266">0</div>
<div class="a t" style="left:1470.66px;top:457.66px;font-size:12.3px;line-height:12.3px;color:#777;font-weight:normal;letter-spacing:-0.120px;">接点颜色:</div>
<div class="a" style="left:1524.5px;top:451.5px;width:27px;height:27px;border:1px solid #e2e5ec;border-radius:4px"></div>
<svg class="a" style="left:1528.3px;top:455.2px;overflow:visible" width="19" height="19" viewBox="0 0 19 19"><rect x="2" y="2" width="5" height="5" fill="#c4c4c4"/><rect x="2" y="7" width="5" height="5" fill="#fff"/><rect x="2" y="12" width="5" height="5" fill="#c4c4c4"/><rect x="7" y="2" width="5" height="5" fill="#fff"/><rect x="7" y="7" width="5" height="5" fill="#c4c4c4"/><rect x="7" y="12" width="5" height="5" fill="#fff"/><rect x="12" y="2" width="5" height="5" fill="#c4c4c4"/><rect x="12" y="7" width="5" height="5" fill="#fff"/><rect x="12" y="12" width="5" height="5" fill="#c4c4c4"/><rect x="7.5" y="7.5" width="4" height="4" fill="#d8d8d8"/><rect x="1.5" y="1.5" width="16" height="16" rx="1.2" fill="none" stroke="#8a8a8a" stroke-width="1.2"/></svg>
<div class="a" style="left:1666px;top:451.5px;width:72.5px;height:28px;background:#fef0f0;border:1px solid #fbc4c4;border-radius:14px"></div>
<svg class="a" style="left:1682px;top:459.5px;" width="11" height="12" viewBox="0 0 11 12"><g fill="none" stroke="#f56c6c" stroke-width="1.1"><path d="M0.5 2.5H10.5M3.5 2.5V0.7H7.5V2.5M1.8 2.5V11.3H9.2V2.5M4.3 4.5V9.3M6.7 4.5V9.3"/></g></svg>
<div class="a t" style="left:1698.34px;top:460.12px;font-size:12px;line-height:12px;color:#f56c6c;font-weight:normal;letter-spacing:0.480px;">删除</div>
<div class="a" style="left:1465px;top:494px;width:274.5px;height:74px;background:#f8f8f8"></div>
<div class="a" style="left:1470px;top:502.5px;width:127.5px;height:27.5px;background:#fff;border:1px solid #dcdfe6;border-radius:4px"></div>
<div class="a" style="left:1568.5px;top:503.5px;width:28px;height:25.5px;background:#f5f7fa;border-left:1px solid #dcdfe6;border-radius:0 3px 3px 0"></div>
<div class="a" style="left:1568.5px;top:516px;width:28px;height:1px;background:#dcdfe6"></div>
<svg class="a" style="left:1577.5px;top:507px;" width="10" height="22" viewBox="0 0 10 22"><path d="M1 5L5 1.5L9 5M1 15.5L5 19L9 15.5" fill="none" stroke="#909399" stroke-width="1"/></svg>
<div class="a t" style="left:1468px;top:508.5px;width:98.5px;text-align:center;font-size:12.5px;line-height:14px;color:#606266">0.06</div>
<div class="a" style="left:1605px;top:502.5px;width:126.5px;height:27.5px;background:#fff;border:1px solid #dcdfe6;border-radius:4px"></div>
<div class="a" style="left:1702.5px;top:503.5px;width:28px;height:25.5px;background:#f5f7fa;border-left:1px solid #dcdfe6;border-radius:0 3px 3px 0"></div>
<div class="a" style="left:1702.5px;top:516px;width:28px;height:1px;background:#dcdfe6"></div>
<svg class="a" style="left:1711.5px;top:507px;" width="10" height="22" viewBox="0 0 10 22"><path d="M1 5L5 1.5L9 5M1 15.5L5 19L9 15.5" fill="none" stroke="#909399" stroke-width="1"/></svg>
<div class="a t" style="left:1603px;top:508.5px;width:97.5px;text-align:center;font-size:12.5px;line-height:14px;color:#606266">0.27</div>
<div class="a t" style="left:1470.66px;top:541.66px;font-size:12.3px;line-height:12.3px;color:#777;font-weight:normal;letter-spacing:-0.120px;">接点颜色:</div>
<div class="a" style="left:1524.5px;top:535.5px;width:27px;height:27px;border:1px solid #e2e5ec;border-radius:4px"></div>
<svg class="a" style="left:1528.3px;top:539.2px;overflow:visible" width="19" height="19" viewBox="0 0 19 19"><rect x="2" y="2" width="5" height="5" fill="#c4c4c4"/><rect x="2" y="7" width="5" height="5" fill="#fff"/><rect x="2" y="12" width="5" height="5" fill="#c4c4c4"/><rect x="7" y="2" width="5" height="5" fill="#fff"/><rect x="7" y="7" width="5" height="5" fill="#c4c4c4"/><rect x="7" y="12" width="5" height="5" fill="#fff"/><rect x="12" y="2" width="5" height="5" fill="#c4c4c4"/><rect x="12" y="7" width="5" height="5" fill="#fff"/><rect x="12" y="12" width="5" height="5" fill="#c4c4c4"/><rect x="7.5" y="7.5" width="4" height="4" fill="#d8d8d8"/><rect x="1.5" y="1.5" width="16" height="16" rx="1.2" fill="none" stroke="#8a8a8a" stroke-width="1.2"/></svg>
<div class="a" style="left:1666px;top:535.5px;width:72.5px;height:28px;background:#fef0f0;border:1px solid #fbc4c4;border-radius:14px"></div>
<svg class="a" style="left:1682px;top:543.5px;" width="11" height="12" viewBox="0 0 11 12"><g fill="none" stroke="#f56c6c" stroke-width="1.1"><path d="M0.5 2.5H10.5M3.5 2.5V0.7H7.5V2.5M1.8 2.5V11.3H9.2V2.5M4.3 4.5V9.3M6.7 4.5V9.3"/></g></svg>
<div class="a t" style="left:1698.34px;top:544.12px;font-size:12px;line-height:12px;color:#f56c6c;font-weight:normal;letter-spacing:0.480px;">删除</div>
<div class="a" style="left:1465px;top:578px;width:274.5px;height:74px;background:#f8f8f8"></div>
<div class="a" style="left:1470px;top:586.5px;width:127.5px;height:27.5px;background:#fff;border:1px solid #dcdfe6;border-radius:4px"></div>
<div class="a" style="left:1568.5px;top:587.5px;width:28px;height:25.5px;background:#f5f7fa;border-left:1px solid #dcdfe6;border-radius:0 3px 3px 0"></div>
<div class="a" style="left:1568.5px;top:600px;width:28px;height:1px;background:#dcdfe6"></div>
<svg class="a" style="left:1577.5px;top:591px;" width="10" height="22" viewBox="0 0 10 22"><path d="M1 5L5 1.5L9 5M1 15.5L5 19L9 15.5" fill="none" stroke="#909399" stroke-width="1"/></svg>
<div class="a t" style="left:1468px;top:592.5px;width:98.5px;text-align:center;font-size:12.5px;line-height:14px;color:#606266">0</div>
<div class="a" style="left:1605px;top:586.5px;width:126.5px;height:27.5px;background:#fff;border:1px solid #dcdfe6;border-radius:4px"></div>
<div class="a" style="left:1702.5px;top:587.5px;width:28px;height:25.5px;background:#f5f7fa;border-left:1px solid #dcdfe6;border-radius:0 3px 3px 0"></div>
<div class="a" style="left:1702.5px;top:600px;width:28px;height:1px;background:#dcdfe6"></div>
<svg class="a" style="left:1711.5px;top:591px;" width="10" height="22" viewBox="0 0 10 22"><path d="M1 5L5 1.5L9 5M1 15.5L5 19L9 15.5" fill="none" stroke="#909399" stroke-width="1"/></svg>
<div class="a t" style="left:1603px;top:592.5px;width:97.5px;text-align:center;font-size:12.5px;line-height:14px;color:#606266">0.66</div>
<div class="a t" style="left:1470.66px;top:625.66px;font-size:12.3px;line-height:12.3px;color:#777;font-weight:normal;letter-spacing:-0.120px;">接点颜色:</div>
<div class="a" style="left:1524.5px;top:619.5px;width:27px;height:27px;border:1px solid #e2e5ec;border-radius:4px"></div>
<svg class="a" style="left:1528.3px;top:623.2px;overflow:visible" width="19" height="19" viewBox="0 0 19 19"><rect x="2" y="2" width="5" height="5" fill="#c4c4c4"/><rect x="2" y="7" width="5" height="5" fill="#fff"/><rect x="2" y="12" width="5" height="5" fill="#c4c4c4"/><rect x="7" y="2" width="5" height="5" fill="#fff"/><rect x="7" y="7" width="5" height="5" fill="#c4c4c4"/><rect x="7" y="12" width="5" height="5" fill="#fff"/><rect x="12" y="2" width="5" height="5" fill="#c4c4c4"/><rect x="12" y="7" width="5" height="5" fill="#fff"/><rect x="12" y="12" width="5" height="5" fill="#c4c4c4"/><rect x="7.5" y="7.5" width="4" height="4" fill="#d8d8d8"/><rect x="1.5" y="1.5" width="16" height="16" rx="1.2" fill="none" stroke="#8a8a8a" stroke-width="1.2"/></svg>
<div class="a" style="left:1666px;top:619.5px;width:72.5px;height:28px;background:#fef0f0;border:1px solid #fbc4c4;border-radius:14px"></div>
<svg class="a" style="left:1682px;top:627.5px;" width="11" height="12" viewBox="0 0 11 12"><g fill="none" stroke="#f56c6c" stroke-width="1.1"><path d="M0.5 2.5H10.5M3.5 2.5V0.7H7.5V2.5M1.8 2.5V11.3H9.2V2.5M4.3 4.5V9.3M6.7 4.5V9.3"/></g></svg>
<div class="a t" style="left:1698.34px;top:628.12px;font-size:12px;line-height:12px;color:#f56c6c;font-weight:normal;letter-spacing:0.480px;">删除</div>
<div class="a" style="left:1465px;top:662px;width:274.5px;height:74px;background:#f8f8f8"></div>
<div class="a" style="left:1470px;top:670.5px;width:127.5px;height:27.5px;background:#fff;border:1px solid #dcdfe6;border-radius:4px"></div>
<div class="a" style="left:1568.5px;top:671.5px;width:28px;height:25.5px;background:#f5f7fa;border-left:1px solid #dcdfe6;border-radius:0 3px 3px 0"></div>
<div class="a" style="left:1568.5px;top:684px;width:28px;height:1px;background:#dcdfe6"></div>
<svg class="a" style="left:1577.5px;top:675px;" width="10" height="22" viewBox="0 0 10 22"><path d="M1 5L5 1.5L9 5M1 15.5L5 19L9 15.5" fill="none" stroke="#909399" stroke-width="1"/></svg>
<div class="a t" style="left:1468px;top:676.5px;width:98.5px;text-align:center;font-size:12.5px;line-height:14px;color:#606266">0</div>
<div class="a" style="left:1605px;top:670.5px;width:126.5px;height:27.5px;background:#fff;border:1px solid #dcdfe6;border-radius:4px"></div>
<div class="a" style="left:1702.5px;top:671.5px;width:28px;height:25.5px;background:#f5f7fa;border-left:1px solid #dcdfe6;border-radius:0 3px 3px 0"></div>
<div class="a" style="left:1702.5px;top:684px;width:28px;height:1px;background:#dcdfe6"></div>
<svg class="a" style="left:1711.5px;top:675px;" width="10" height="22" viewBox="0 0 10 22"><path d="M1 5L5 1.5L9 5M1 15.5L5 19L9 15.5" fill="none" stroke="#909399" stroke-width="1"/></svg>
<div class="a t" style="left:1603px;top:676.5px;width:97.5px;text-align:center;font-size:12.5px;line-height:14px;color:#606266">1</div>
<div class="a t" style="left:1470.66px;top:709.66px;font-size:12.3px;line-height:12.3px;color:#777;font-weight:normal;letter-spacing:-0.120px;">接点颜色:</div>
<div class="a" style="left:1524.5px;top:703.5px;width:27px;height:27px;border:1px solid #e2e5ec;border-radius:4px"></div>
<svg class="a" style="left:1528.3px;top:707.2px;overflow:visible" width="19" height="19" viewBox="0 0 19 19"><rect x="2" y="2" width="5" height="5" fill="#c4c4c4"/><rect x="2" y="7" width="5" height="5" fill="#fff"/><rect x="2" y="12" width="5" height="5" fill="#c4c4c4"/><rect x="7" y="2" width="5" height="5" fill="#fff"/><rect x="7" y="7" width="5" height="5" fill="#c4c4c4"/><rect x="7" y="12" width="5" height="5" fill="#fff"/><rect x="12" y="2" width="5" height="5" fill="#c4c4c4"/><rect x="12" y="7" width="5" height="5" fill="#fff"/><rect x="12" y="12" width="5" height="5" fill="#c4c4c4"/><rect x="7.5" y="7.5" width="4" height="4" fill="#d8d8d8"/><rect x="1.5" y="1.5" width="16" height="16" rx="1.2" fill="none" stroke="#8a8a8a" stroke-width="1.2"/></svg>
<div class="a" style="left:1666px;top:703.5px;width:72.5px;height:28px;background:#fef0f0;border:1px solid #fbc4c4;border-radius:14px"></div>
<svg class="a" style="left:1682px;top:711.5px;" width="11" height="12" viewBox="0 0 11 12"><g fill="none" stroke="#f56c6c" stroke-width="1.1"><path d="M0.5 2.5H10.5M3.5 2.5V0.7H7.5V2.5M1.8 2.5V11.3H9.2V2.5M4.3 4.5V9.3M6.7 4.5V9.3"/></g></svg>
<div class="a t" style="left:1698.34px;top:712.12px;font-size:12px;line-height:12px;color:#f56c6c;font-weight:normal;letter-spacing:0.480px;">删除</div>
<div class="a" style="left:1465px;top:746px;width:274.5px;height:74px;background:#f8f8f8"></div>
<div class="a" style="left:1470px;top:754.5px;width:127.5px;height:27.5px;background:#fff;border:1px solid #dcdfe6;border-radius:4px"></div>
<div class="a" style="left:1568.5px;top:755.5px;width:28px;height:25.5px;background:#f5f7fa;border-left:1px solid #dcdfe6;border-radius:0 3px 3px 0"></div>
<div class="a" style="left:1568.5px;top:768px;width:28px;height:1px;background:#dcdfe6"></div>
<svg class="a" style="left:1577.5px;top:759px;" width="10" height="22" viewBox="0 0 10 22"><path d="M1 5L5 1.5L9 5M1 15.5L5 19L9 15.5" fill="none" stroke="#909399" stroke-width="1"/></svg>
<div class="a t" style="left:1468px;top:760.5px;width:98.5px;text-align:center;font-size:12.5px;line-height:14px;color:#606266">1</div>
<div class="a" style="left:1605px;top:754.5px;width:126.5px;height:27.5px;background:#fff;border:1px solid #dcdfe6;border-radius:4px"></div>
<div class="a" style="left:1702.5px;top:755.5px;width:28px;height:25.5px;background:#f5f7fa;border-left:1px solid #dcdfe6;border-radius:0 3px 3px 0"></div>
<div class="a" style="left:1702.5px;top:768px;width:28px;height:1px;background:#dcdfe6"></div>
<svg class="a" style="left:1711.5px;top:759px;" width="10" height="22" viewBox="0 0 10 22"><path d="M1 5L5 1.5L9 5M1 15.5L5 19L9 15.5" fill="none" stroke="#909399" stroke-width="1"/></svg>
<div class="a t" style="left:1603px;top:760.5px;width:97.5px;text-align:center;font-size:12.5px;line-height:14px;color:#606266">0</div>
<div class="a t" style="left:1470.66px;top:793.66px;font-size:12.3px;line-height:12.3px;color:#777;font-weight:normal;letter-spacing:-0.120px;">接点颜色:</div>
<div class="a" style="left:1524.5px;top:787.5px;width:27px;height:27px;border:1px solid #e2e5ec;border-radius:4px"></div>
<svg class="a" style="left:1528.3px;top:791.2px;overflow:visible" width="19" height="19" viewBox="0 0 19 19"><rect x="2" y="2" width="5" height="5" fill="#c4c4c4"/><rect x="2" y="7" width="5" height="5" fill="#fff"/><rect x="2" y="12" width="5" height="5" fill="#c4c4c4"/><rect x="7" y="2" width="5" height="5" fill="#fff"/><rect x="7" y="7" width="5" height="5" fill="#c4c4c4"/><rect x="7" y="12" width="5" height="5" fill="#fff"/><rect x="12" y="2" width="5" height="5" fill="#c4c4c4"/><rect x="12" y="7" width="5" height="5" fill="#fff"/><rect x="12" y="12" width="5" height="5" fill="#c4c4c4"/><rect x="7.5" y="7.5" width="4" height="4" fill="#d8d8d8"/><rect x="1.5" y="1.5" width="16" height="16" rx="1.2" fill="none" stroke="#8a8a8a" stroke-width="1.2"/></svg>
<div class="a" style="left:1666px;top:787.5px;width:72.5px;height:28px;background:#fef0f0;border:1px solid #fbc4c4;border-radius:14px"></div>
<svg class="a" style="left:1682px;top:795.5px;" width="11" height="12" viewBox="0 0 11 12"><g fill="none" stroke="#f56c6c" stroke-width="1.1"><path d="M0.5 2.5H10.5M3.5 2.5V0.7H7.5V2.5M1.8 2.5V11.3H9.2V2.5M4.3 4.5V9.3M6.7 4.5V9.3"/></g></svg>
<div class="a t" style="left:1698.34px;top:796.12px;font-size:12px;line-height:12px;color:#f56c6c;font-weight:normal;letter-spacing:0.480px;">删除</div>
<div class="a" style="left:1465px;top:830px;width:274.5px;height:74px;background:#f8f8f8"></div>
<div class="a" style="left:1470px;top:838.5px;width:127.5px;height:27.5px;background:#fff;border:1px solid #dcdfe6;border-radius:4px"></div>
<div class="a" style="left:1568.5px;top:839.5px;width:28px;height:25.5px;background:#f5f7fa;border-left:1px solid #dcdfe6;border-radius:0 3px 3px 0"></div>
<div class="a" style="left:1568.5px;top:852px;width:28px;height:1px;background:#dcdfe6"></div>
<svg class="a" style="left:1577.5px;top:843px;" width="10" height="22" viewBox="0 0 10 22"><path d="M1 5L5 1.5L9 5M1 15.5L5 19L9 15.5" fill="none" stroke="#909399" stroke-width="1"/></svg>
<div class="a t" style="left:1468px;top:844.5px;width:98.5px;text-align:center;font-size:12.5px;line-height:14px;color:#606266">1</div>
<div class="a" style="left:1605px;top:838.5px;width:126.5px;height:27.5px;background:#fff;border:1px solid #dcdfe6;border-radius:4px"></div>
<div class="a" style="left:1702.5px;top:839.5px;width:28px;height:25.5px;background:#f5f7fa;border-left:1px solid #dcdfe6;border-radius:0 3px 3px 0"></div>
<div class="a" style="left:1702.5px;top:852px;width:28px;height:1px;background:#dcdfe6"></div>
<svg class="a" style="left:1711.5px;top:843px;" width="10" height="22" viewBox="0 0 10 22"><path d="M1 5L5 1.5L9 5M1 15.5L5 19L9 15.5" fill="none" stroke="#909399" stroke-width="1"/></svg>
<div class="a t" style="left:1603px;top:844.5px;width:97.5px;text-align:center;font-size:12.5px;line-height:14px;color:#606266">0.33</div>
<div class="a t" style="left:1470.66px;top:877.66px;font-size:12.3px;line-height:12.3px;color:#777;font-weight:normal;letter-spacing:-0.120px;">接点颜色:</div>
<div class="a" style="left:1524.5px;top:871.5px;width:27px;height:27px;border:1px solid #e2e5ec;border-radius:4px"></div>
<svg class="a" style="left:1528.3px;top:875.2px;overflow:visible" width="19" height="19" viewBox="0 0 19 19"><rect x="2" y="2" width="5" height="5" fill="#c4c4c4"/><rect x="2" y="7" width="5" height="5" fill="#fff"/><rect x="2" y="12" width="5" height="5" fill="#c4c4c4"/><rect x="7" y="2" width="5" height="5" fill="#fff"/><rect x="7" y="7" width="5" height="5" fill="#c4c4c4"/><rect x="7" y="12" width="5" height="5" fill="#fff"/><rect x="12" y="2" width="5" height="5" fill="#c4c4c4"/><rect x="12" y="7" width="5" height="5" fill="#fff"/><rect x="12" y="12" width="5" height="5" fill="#c4c4c4"/><rect x="7.5" y="7.5" width="4" height="4" fill="#d8d8d8"/><rect x="1.5" y="1.5" width="16" height="16" rx="1.2" fill="none" stroke="#8a8a8a" stroke-width="1.2"/></svg>
<div class="a" style="left:1666px;top:871.5px;width:72.5px;height:28px;background:#fef0f0;border:1px solid #fbc4c4;border-radius:14px"></div>
<svg class="a" style="left:1682px;top:879.5px;" width="11" height="12" viewBox="0 0 11 12"><g fill="none" stroke="#f56c6c" stroke-width="1.1"><path d="M0.5 2.5H10.5M3.5 2.5V0.7H7.5V2.5M1.8 2.5V11.3H9.2V2.5M4.3 4.5V9.3M6.7 4.5V9.3"/></g></svg>
<div class="a t" style="left:1698.34px;top:880.12px;font-size:12px;line-height:12px;color:#f56c6c;font-weight:normal;letter-spacing:0.480px;">删除</div>
<div class="a" style="left:1739.5px;top:410px;width:4.5px;height:484px;background:#ededed"></div>
<div class="a" style="left:1739.5px;top:410px;width:4.5px;height:230px;background:#d6d6d6"></div>
</body></html>
